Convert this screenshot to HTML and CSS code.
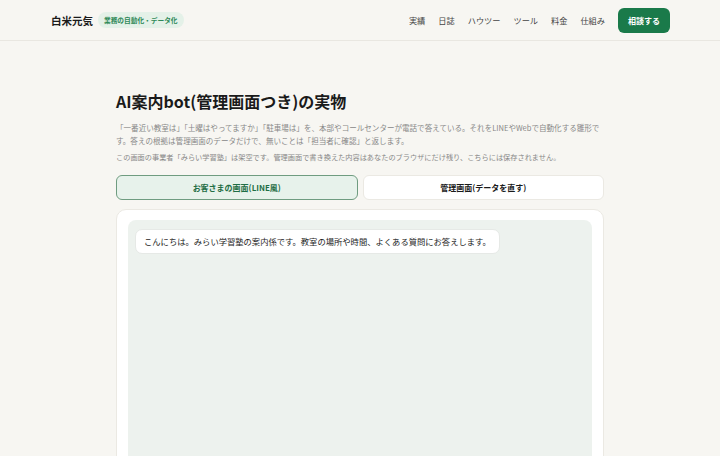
FILE: index.html
```html
<!DOCTYPE html>
<html lang="ja">
<head>
  <meta charset="UTF-8" />
  <title>AI案内bot(管理画面つき)の実物 - 白米元気</title>
  <link rel="stylesheet" href="styles.css">
</head>
<body>
  <header class="site-header">
    <div class="brand">
      <span class="brand-name">白米元気</span>
      <span class="brand-tag">業務の自動化・データ化</span>
    </div>
    <nav class="nav">
      <a href="#">実績</a>
      <a href="#">日誌</a>
      <a href="#">ハウツー</a>
      <a href="#">ツール</a>
      <a href="#">料金</a>
      <a href="#">仕組み</a>
      <a href="#" class="nav-cta">相談する</a>
    </nav>
  </header>

  <main class="container">
    <h1>AI案内bot(管理画面つき)の実物</h1>
    <p class="lead">「一番近い教室は」「土曜はやってますか」「駐車場は」を、本部やコールセンターが電話で答えている。それをLINEやWebで自動化する雛形です。答えの根拠は管理画面のデータだけで、無いことは「担当者に確認」と返します。</p>
    <p class="note">この画面の事業者「みらい学習塾」は架空です。管理画面で書き換えた内容はあなたのブラウザにだけ残り、こちらには保存されません。</p>

    <div class="tabs">
      <button type="button" class="tab active">お客さまの画面(LINE風)</button>
      <button type="button" class="tab">管理画面(データを直す)</button>
    </div>

    <section class="panel">
      <div class="chat">
        <div class="bubble">こんにちは。みらい学習塾の案内係です。教室の場所や時間、よくある質問にお答えします。</div>
      </div>
    </section>
  </main>
</body>
</html>
```

FILE: styles.css
```css
body {
  font-family: "Noto Sans CJK JP", "Noto Sans", sans-serif;
  background-color: #f7f6f2;
  color: #1c1c1c;
  margin: 0;
  padding: 0;
}

a {
  color: inherit;
  text-decoration: none;
}

.site-header {
  display: flex;
  align-items: center;
  justify-content: space-between;
  height: 40px;
  padding: 0 50px 0 51px;
  border-bottom: 1px solid #e9e7e1;
}

.brand {
  display: flex;
  align-items: center;
  gap: 5px;
}

.brand-name {
  font-size: 10.5px;
  font-weight: 700;
  color: #1a1a1a;
}

.brand-tag {
  font-size: 6.7px;
  font-weight: 700;
  color: #2f8a58;
  background-color: #e4f1e8;
  padding: 3px 6px;
  border-radius: 10px;
}

.nav {
  display: flex;
  align-items: center;
  gap: 13px;
  font-size: 8.2px;
  color: #444;
}

.nav-cta {
  background-color: #1a7a4a;
  color: #fff;
  font-weight: 700;
  font-size: 8px;
  padding: 7px 10px;
  border-radius: 6px;
}

.container {
  width: 488px;
  margin: 0 auto;
  padding-top: 48px;
}

h1 {
  font-size: 16px;
  font-weight: 700;
  margin: 0 0 8px;
  color: #1a1a1a;
}

.lead,
.note {
  font-size: 7.55px;
  line-height: 13px;
  color: #888;
  margin: 0 0 4px;
}

.note {
  font-size: 7.2px;
}

.tabs {
  display: grid;
  grid-template-columns: 1fr 1fr;
  gap: 5px;
  margin-top: 11px;
}

.tab {
  font-family: inherit;
  font-size: 8px;
  font-weight: 700;
  height: 25px;
  border: 1px solid #ebe9e3;
  border-radius: 6px;
  background-color: #fff;
  color: #1a1a1a;
}

.tab.active {
  background-color: #e7f2eb;
  border-color: #6f9c80;
  color: #1f6e45;
}

.panel {
  margin-top: 9px;
  background-color: #fff;
  border: 1px solid #ebe9e3;
  border-radius: 10px;
  padding: 10px 11px 0;
  height: 300px;
}

.chat {
  display: flex;
  flex-direction: column;
  align-items: flex-start;
  background-color: #edf2ee;
  border-radius: 8px;
  padding: 9px 7px;
  height: 100%;
  box-sizing: border-box;
}

.bubble {
  background-color: #fff;
  border: 1px solid #e6e9e6;
  border-radius: 7px;
  font-size: 8.3px;
  padding: 6px 8px;
  line-height: 11px;
}
```
